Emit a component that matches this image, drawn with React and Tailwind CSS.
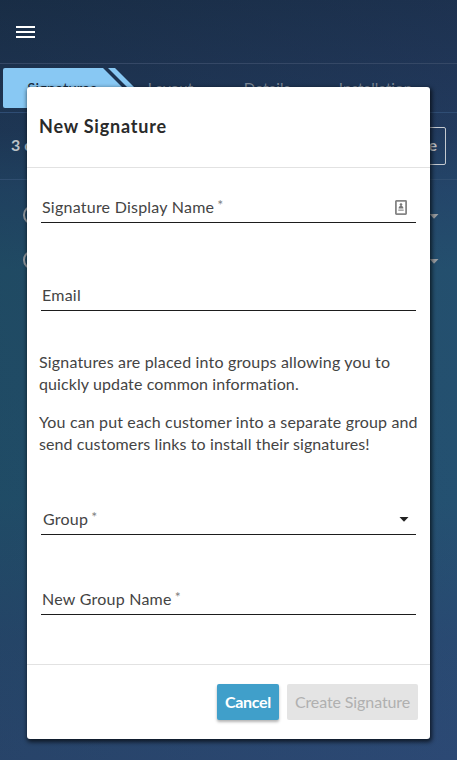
import { useState } from 'react';
import clsx from 'clsx';

const tabs = [
  { name: 'Signatures', width: 'w-[118px]' },
  { name: 'Layout', width: 'w-[99px]' },
  { name: 'Details', width: 'w-[94px]' },
  { name: 'Installation', width: 'w-[123px]' },
];

const Caret = ({ className }) => (
  <svg width="10" height="5" viewBox="0 0 10 5" className={className}>
    <path d="M0.5 0h9L5 4.8z" fill="currentColor" />
  </svg>
);

const ContactIcon = () => (
  <svg width="12" height="15" viewBox="0 0 12 15" className="mr-[9px]">
    <rect x="0.9" y="0.9" width="10.2" height="13.2" rx="0.5" fill="none" stroke="#858585" strokeWidth="1.8" />
    <circle cx="6" cy="4.6" r="1.3" fill="#777" />
    <path d="M3.6 8.4c0-1.8 1-2.6 2.4-2.6s2.4.8 2.4 2.6z" fill="#777" />
    <path d="M3.3 10.2h5.4" stroke="#aaa" strokeWidth="1.6" />
  </svg>
);

const Field = ({ label, required, className, children }) => (
  <label className={clsx('mx-[2px] flex h-[30px] items-center justify-between border-b border-[#1d1d1d]', className)}>
    <span className="-mt-[2px] flex whitespace-nowrap text-[16px] leading-[22px] tracking-[0.24px] text-[#444]">
      {label}
      {required && <span className="-mt-[2px] ml-[3px] text-[14px] text-[#808080]">*</span>}
    </span>
    {children}
  </label>
);

const Header = () => (
  <header className="flex h-16 items-center border-b border-[#354866] pl-4">
    <svg width="19" height="12" viewBox="0 0 19 12">
      <path d="M0 1h19M0 6h19M0 11h19" stroke="#fff" strokeWidth="2" />
    </svg>
  </header>
);

const TabBar = () => (
  <nav className="flex h-[49px] border-b border-[#2f4d74] pt-1 pl-[3px]">
    {tabs.map((t, i) => (
      <div key={t.name} className={clsx('relative flex h-10 shrink-0 items-center justify-center text-[15px] tracking-[0.1px]', t.width, i === 0 ? 'text-[#192b3c]' : 'text-[#7b8796]')}>
        {i === 0 && (
          <svg width="153" height="40" className="absolute top-0 left-0">
            <path d="M2 0H100L140 40H2Q0 40 0 38V2Q0 0 2 0Z" fill="#88c8f3" />
            <path d="M105 0H112L152 40H145Z" fill="#88c8f3" />
          </svg>
        )}
        <span className="relative">{t.name}</span>
      </div>
    ))}
  </nav>
);

const Toolbar = () => (
  <div className="flex h-[67px] items-center justify-between border-b border-[#304e70] px-[11px] text-[16px] font-bold text-[#bcc1c7]">
    <span className="-mt-[2px]">3 of 5</span>
    <button className="h-[38px] rounded-[2px] border border-[#c5cad0] px-2 pb-[2px]">Create</button>
  </div>
);

const Rows = () => (
  <div className="pt-[13px]">
    {[0, 1].map(r => (
      <div key={r} className="flex h-[45px] items-center justify-between pr-[18px] pl-[23px]">
        <span className="-mt-px h-5 w-5 rounded-full border-[2.5px] border-[#93999f]" />
        <Caret className="mt-[2px] text-[#9b9fa3]" />
      </div>
    ))}
  </div>
);

const NewSignature = () => (
  <section className="absolute top-[87px] left-[27px] flex h-[652px] w-[403px] flex-col rounded-[3px] bg-white shadow-[1px_2px_4px_1px_rgba(0,0,0,0.65)]">
    <h2 className="flex h-[81px] items-center border-b border-[#e2e2e2] pb-[2px] pl-3 text-[18px] font-bold tracking-[0.8px] text-[#2a2a2a]">
      New Signature
    </h2>
    <div className="flex flex-1 flex-col px-3">
      <Field label="Signature Display Name" required className="mt-[25px] pl-px">
        <ContactIcon />
      </Field>
      <Field label="Email" className="mt-[58px] pl-px" />
      <p className="mt-10 whitespace-nowrap text-[16px] leading-[22px] tracking-[0.17px] text-[#444]">
        Signatures are placed into groups allowing you to<br />
        <span className="tracking-[0.1px]">quickly update common information.</span>
      </p>
      <p className="mt-4 whitespace-nowrap text-[16px] leading-[22px] tracking-[0.14px] text-[#444]">
        You can put each customer into a separate group and<br />
        <span className="tracking-[0.1px]">send customers links to install their signatures!</span>
      </p>
      <Field label="Group" required className="mt-[50px] pl-[2px]">
        <Caret className="mr-[7px] text-[#222]" />
      </Field>
      <Field label="New Group Name" required className="mt-[50px] pl-px" />
    </div>
    <footer className="flex h-[75px] items-center justify-end gap-2 border-t border-[#e2e2e2] pr-3 text-[16px]">
      <button className="h-9 w-[62px] rounded-[2px] bg-[#409fca] pb-px font-bold tracking-[-0.3px] text-white shadow-[0_2px_3px_rgba(0,0,0,0.3)]">
        Cancel
      </button>
      <button disabled className="h-9 w-[131px] rounded-[2px] bg-[#e4e4e4] pb-px tracking-[-0.1px] whitespace-nowrap text-[#b0b0b0]">
        Create Signature
      </button>
    </footer>
  </section>
);

const App = () => {
  const [open] = useState(true);

  return (
    <div className="relative h-[760px] w-[457px] overflow-hidden bg-[linear-gradient(90deg,rgba(20,38,56,0.22),rgba(40,60,105,0.2)),linear-gradient(180deg,#1a2f49_0px,#1e3452_64px,#203a5b_130px,#23486a_190px,#23546f_270px,#235673_500px,#294d74_640px,#2d4c77_760px)] font-[Lato,sans-serif]">
      <Header />
      <TabBar />
      <Toolbar />
      <Rows />
      {open && <NewSignature />}
    </div>
  );
};

export default App;
